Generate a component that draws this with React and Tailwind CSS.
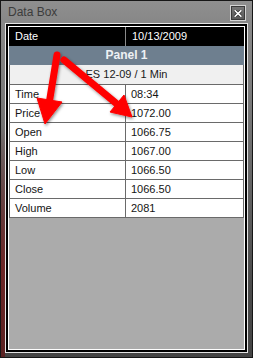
import React from "react";

const rows = [
  ["Time", "08:34"],
  ["Price", "1072.00"],
  ["Open", "1066.75"],
  ["High", "1067.00"],
  ["Low", "1066.50"],
  ["Close", "1066.50"],
  ["Volume", "2081"],
];

export default function App() {
  return (
    <div className="relative w-[253px] h-[358px] flex flex-col border border-[#161616] font-['Liberation_Sans',Arial,sans-serif] [background:linear-gradient(to_bottom,transparent_35%,#6e2828_75%,#5a2222)_0_0/4px_100%_no-repeat,linear-gradient(to_bottom,#8c8c8c,#7c7c7c_25%,#4a4a4a_80%,#444)]">
      {/* title bar */}
      <div className="h-[22px] flex items-start justify-between pl-[7px] pr-[6px] bg-[linear-gradient(to_bottom,#8f8f8f,#878787)]">
        <span className="mt-[3px] text-[12px] leading-[16px] text-[#3c3c3c]">Data Box</span>
        <div className="mt-[4px] w-[16px] h-[16px] border border-[#d4d4d4] bg-[#3a3a3a] p-px">
          <div className="w-full h-full bg-[linear-gradient(to_bottom,#767676,#5a5a5a)] flex items-center justify-center">
            <svg width="8" height="7" viewBox="0 0 8 7">
              <path d="M1.2 0.8 L6.8 6.2 M6.8 0.8 L1.2 6.2" stroke="#2a2a2a" strokeWidth="3" strokeLinecap="square" />
              <path d="M1.2 0.8 L6.8 6.2 M6.8 0.8 L1.2 6.2" stroke="#ffffff" strokeWidth="1.6" strokeLinecap="square" />
            </svg>
          </div>
        </div>
      </div>

      {/* inner frame */}
      <div className="flex-1 mx-[4px] mb-[4px] border border-[#e4e4e4] flex flex-col">
        <div className="flex-1 border-2 border-black flex flex-col">
          <div className="flex-1 border border-white bg-[#ababab] flex flex-col text-[11px] leading-[13px]">
            {/* header */}
            <div className="h-[19px] bg-black text-white flex items-center">
              <div className="w-[117px] h-full border-r border-[#8a8a8a] pl-[6px] flex items-center">Date</div>
              <div className="flex-1 pl-[6px]">10/13/2009</div>
            </div>
            {/* panel */}
            <div className="h-[19px] bg-[#6e7f8f] flex items-center justify-center text-[12px] font-bold text-[#eef1f4]">
              Panel 1
            </div>
            {/* instrument */}
            <div className="h-[19px] bg-[#f0f0f0] border-x border-[#6a6a6a] flex items-center justify-center text-[#1a1a1a]">
              ES 12-09 / 1 Min
            </div>
            {/* data rows */}
            <div className="border-b border-[#6a6a6a]">
              {rows.map(([k, v]) => (
                <div key={k} className="h-[19px] bg-white border-t border-x border-[#6a6a6a] flex text-[#141414]">
                  <div className="w-[116px] border-r border-[#6a6a6a] pl-[5px] flex items-center">{k}</div>
                  <div className="flex-1 pl-[5px] flex items-center">{v}</div>
                </div>
              ))}
            </div>
          </div>
        </div>
      </div>

      {/* annotation arrows */}
      <svg className="absolute -left-px -top-px pointer-events-none" width="253" height="358" viewBox="0 0 253 358">
        <defs>
          <filter id="sh" x="-20%" y="-20%" width="140%" height="140%">
            <feDropShadow dx="1" dy="1.5" stdDeviation="1.5" floodColor="#000" floodOpacity="0.45" />
          </filter>
        </defs>
        <g filter="url(#sh)" fill="#ff0000" stroke="#ff0000">
          <line x1="57" y1="55" x2="49.5" y2="101" strokeWidth="7" strokeLinecap="round" />
          <polygon points="45,124 62,102 37,98" strokeWidth="1" strokeLinejoin="round" />
          <line x1="64" y1="60" x2="117" y2="104" strokeWidth="7" strokeLinecap="round" />
          <polygon points="132,117 110,112 124,95" strokeWidth="1" strokeLinejoin="round" />
        </g>
      </svg>
    </div>
  );
}
